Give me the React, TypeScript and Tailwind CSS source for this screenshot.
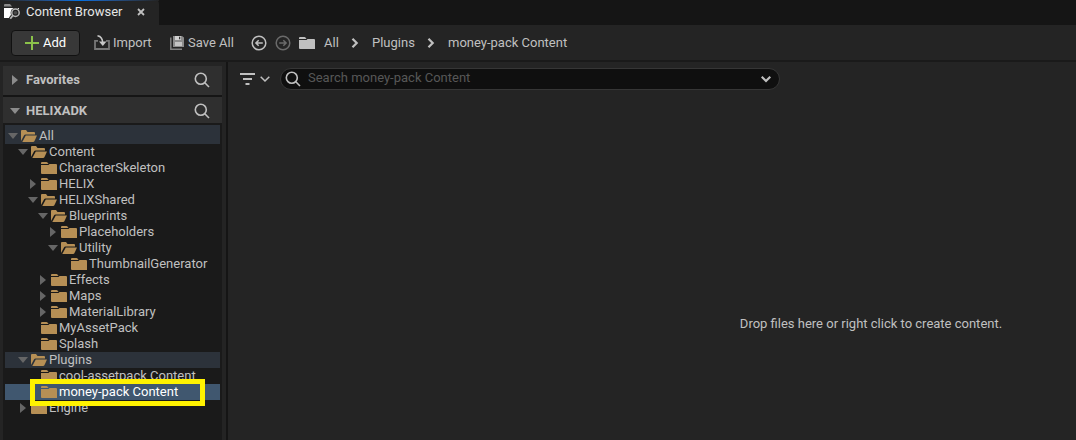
import React from "react";

type Node = {
  label: string;
  depth: number;
  state: "open" | "closed" | "leaf";
  tone?: "path" | "selected";
};

const nodes: Node[] = [
  { label: "All", depth: 0, state: "open", tone: "path" },
  { label: "Content", depth: 1, state: "open" },
  { label: "CharacterSkeleton", depth: 2, state: "leaf" },
  { label: "HELIX", depth: 2, state: "closed" },
  { label: "HELIXShared", depth: 2, state: "open" },
  { label: "Blueprints", depth: 3, state: "open" },
  { label: "Placeholders", depth: 4, state: "closed" },
  { label: "Utility", depth: 4, state: "open" },
  { label: "ThumbnailGenerator", depth: 5, state: "leaf" },
  { label: "Effects", depth: 3, state: "closed" },
  { label: "Maps", depth: 3, state: "closed" },
  { label: "MaterialLibrary", depth: 3, state: "closed" },
  { label: "MyAssetPack", depth: 2, state: "leaf" },
  { label: "Splash", depth: 2, state: "leaf" },
  { label: "Plugins", depth: 1, state: "open", tone: "path" },
  { label: "cool-assetpack Content", depth: 2, state: "leaf" },
  { label: "money-pack Content", depth: 2, state: "leaf", tone: "selected" },
  { label: "Engine", depth: 1, state: "closed" },
];

const indents = ["pl-[3px]", "pl-[13px]", "pl-[23px]", "pl-[33px]", "pl-[43px]", "pl-[53px]"];

function Arrow({ state, className }: { state: Node["state"]; className: string }) {
  return (
    <svg viewBox="0 0 10 10" className={`size-[10px] shrink-0 fill-current ${className}`} aria-hidden="true">
      {state === "open" && <path d="M0 2h10L5 8z" />}
      {state === "closed" && <path d="M2 0v10l6-5z" />}
    </svg>
  );
}

function ClosedFolder({ className }: { className: string }) {
  return (
    <svg viewBox="0 0 16 14" className={`h-[14px] w-4 shrink-0 fill-current ${className}`} aria-hidden="true">
      <path d="M0 2.900V2q0-1 1-1h4.500q.6 0 1 .5L7.500 2.900z" />
      <path d="M0 3.900h7.500L8.500 3H15q1 0 1 1v9H1q-1 0-1-1z" />
    </svg>
  );
}

function OpenFolder({ className }: { className: string }) {
  return (
    <svg viewBox="0 0 16 14" className={`h-[14px] w-4 shrink-0 fill-current ${className}`} aria-hidden="true">
      <path d="M0 12V2q0-1 1-1h4l1.500 2H13q1 0 1 1v1.500H4.500q-1 0-1.400.8z" />
      <path d="M4.800 6.500H16l-2.600 5.700q-.4.800-1.300.800H1.300z" />
    </svg>
  );
}

function SearchIcon({ className }: { className: string }) {
  return (
    <svg viewBox="0 0 16 16" className={`size-4 shrink-0 ${className}`} fill="none" stroke="currentColor" strokeWidth="1.600" aria-hidden="true">
      <circle cx="6.800" cy="6.800" r="5.500" />
      <path d="m10.800 10.800 4.200 4.200" />
    </svg>
  );
}

function Chevron({ className, down = false, thin = false }: { className: string; down?: boolean; thin?: boolean }) {
  return (
    <svg viewBox="0 0 10 10" className={`size-[10px] shrink-0 ${className}`} fill="none" stroke="currentColor" strokeWidth={thin ? 1.5 : 2.2} aria-hidden="true">
      <path d={down ? "m.7 2.700 4.300 4.300 4.300-4.300" : "m2.500.8 4.200 4.200-4.200 4.200"} />
    </svg>
  );
}

function Circled({ flip = false }: { flip?: boolean }) {
  return (
    <svg viewBox="0 0 16 16" className={`size-4 ${flip ? "-scale-x-100" : ""}`} fill="none" stroke="currentColor" strokeWidth="1.500" aria-hidden="true">
      <circle cx="8" cy="8" r="6.800" />
      <path d="M11.800 8H5M7.700 5.200 4.900 8l2.800 2.800" />
    </svg>
  );
}

function TabIcon() {
  return (
    <svg viewBox="0 0 17 16" className="h-4 w-[17px] shrink-0" aria-hidden="true">
      <path d="M0 2.500V1q0-1 1-1h5l2 2.500z" fill="#8a8a8a" />
      <path d="M0 4h15v4l-6 6H0z" fill="#fff" />
      <circle cx="11.500" cy="8.700" r="4.900" fill="#242424" />
      <path d="m9 11.500-2.500 3.500" stroke="#242424" strokeWidth="4" />
      <circle cx="11.500" cy="8.700" r="3.700" fill="none" stroke="#b5b5b5" strokeWidth="1.500" />
      <circle cx="11.500" cy="8.700" r="1.800" fill="#4a4a4a" />
      <path d="m9 11.300-2.700 3.500" stroke="#b5b5b5" strokeWidth="1.800" />
    </svg>
  );
}

function ImportIcon() {
  return (
    <svg viewBox="0 0 16 15" className="h-[15px] w-4 shrink-0" fill="none" aria-hidden="true">
      <path d="M4 5.800H1V14h14V5.800h-3" stroke="#777" strokeWidth="1.800" />
      <path d="M3.500.8Q8.800 1.500 8.800 9" stroke="#c8c8c8" strokeWidth="1.600" />
      <path d="M5 6.500h7.500L8.800 11z" fill="#c8c8c8" />
    </svg>
  );
}

function SaveIcon() {
  return (
    <svg viewBox="0 0 14 14" className="size-[14px] shrink-0" aria-hidden="true">
      <path d="M.8 1.500v11.700H12" fill="none" stroke="#808080" strokeWidth="1.500" />
      <path d="M3 0h9l2 1.500V11H3z" fill="#8c8c8c" />
      <path d="M5 0h6v4H5z" fill="#d0d0d0" />
      <path d="M9 .8h1.300v2.400H9z" fill="#333" />
      <path d="M5 6h7v4H5z" fill="#c4c4c4" />
    </svg>
  );
}

function SectionHeader({ title, state, className }: { title: string; state: "open" | "closed"; className: string }) {
  return (
    <header className={`flex items-center bg-[#2f2f2f] pr-3 pl-[7px] ${className}`}>
      <button type="button" className="flex flex-1 items-center gap-[6px] text-left font-bold">
        <Arrow state={state} className="text-[#8c8c8c]" />
        {title}
      </button>
      <button type="button" aria-label={`Search ${title}`}>
        <SearchIcon className="text-[#c0c0c0]" />
      </button>
    </header>
  );
}

function TreeRow({ node }: { node: Node }) {
  const tone =
    node.tone === "selected"
      ? "bg-[#40576f] text-white"
      : node.tone === "path"
        ? "bg-[#2c323a]"
        : "";
  return (
    <li className={`relative ${tone}`}>
      <button
        type="button"
        className={`flex w-full items-center text-left ${node.depth === 0 ? "h-[19px] pt-[2px]" : "h-4"} ${indents[node.depth]}`}
      >
        <Arrow state={node.state} className="text-[#666]" />
        <span className="ml-[3px] flex items-center gap-[2px] whitespace-nowrap">
          {node.state === "open" ? <OpenFolder className="text-[#b68f55]" /> : <ClosedFolder className="text-[#b68f55]" />}
          {node.label}
        </span>
      </button>
      {node.tone === "selected" && (
        <span className="pointer-events-none absolute -top-[5px] left-[25px] z-10 h-[27px] w-[175px] border-5 border-[#fff200]" />
      )}
    </li>
  );
}

export default function App() {
  return (
    <div className="flex min-h-screen flex-col bg-[#242424] font-[Roboto,sans-serif] text-[13px] leading-4 text-[#c0c0c0]">
      <div className="flex h-[25px] bg-[#151515]">
        <div className="flex w-[159px] flex-col rounded-tr-sm bg-[#242424]">
          <div className="h-px bg-linear-to-r from-[#242424] via-[#0070e0] to-[#242424]" />
          <div className="flex flex-1 items-center pr-[14px] pb-[2px] pl-1">
            <TabIcon />
            <span className="ml-[5px] flex-1 whitespace-nowrap text-[#e6e6e6]">Content Browser</span>
            <button type="button" aria-label="Close tab">
              <svg viewBox="0 0 8 8" className="size-2" stroke="#c0c0c0" strokeWidth="1.800" aria-hidden="true">
                <path d="m1 1 6 6M7 1 1 7" />
              </svg>
            </button>
          </div>
        </div>
      </div>

      <nav className="flex h-[37px] items-center border-b-2 border-[#1a1a1a] pl-[11px]">
        <button type="button" className="flex h-[26px] w-[69px] items-center justify-center gap-1 rounded border border-[#111] bg-[#383838] text-white">
          <svg viewBox="0 0 14 14" className="size-[14px]" stroke="#8bc24a" strokeWidth="2" aria-hidden="true">
            <path d="M7 0v14M0 7h14" />
          </svg>
          Add
        </button>
        <button type="button" className="ml-[14px] flex w-[62px] items-center gap-[3px]">
          <ImportIcon />
          Import
        </button>
        <button type="button" className="ml-[14px] flex w-[68px] items-center gap-1 whitespace-nowrap">
          <SaveIcon />
          Save All
        </button>
        <button type="button" aria-label="Back" className="ml-[13px]">
          <Circled />
        </button>
        <button type="button" aria-label="Forward" className="ml-2 text-[#6a6a6a]">
          <Circled flip />
        </button>
        <ClosedFolder className="ml-2" />
        <a href="#all" className="ml-[9px] w-[14px] whitespace-nowrap">All</a>
        <Chevron className="ml-3" />
        <a href="#plugins" className="ml-3 w-[42px]">Plugins</a>
        <Chevron className="ml-3" />
        <a href="#money-pack" className="ml-3 whitespace-nowrap">money-pack Content</a>
      </nav>

      <div className="flex flex-1">
        <aside className="flex w-[228px] shrink-0 border-r-2 border-[#151515] pr-1 pl-[3px]">
          <div className="flex flex-1 flex-col bg-[#1a1a1a]">
            <div className="h-1 bg-[#242424]" />
            <SectionHeader title="Favorites" state="closed" className="h-[29px] pb-[2px]" />
            <div className="h-[2px] bg-[#151515]" />
            <SectionHeader title="HELIXADK" state="open" className="h-[26px] pt-[2px]" />
            <ul className="mt-[2px] px-[2px]">
              {nodes.map((node) => (
                <TreeRow key={node.label} node={node} />
              ))}
            </ul>
          </div>
        </aside>

        <main className="flex min-w-0 flex-1 flex-col">
          <div className="flex items-center pt-[6px] pl-3">
            <button type="button" aria-label="Filters" className="flex items-center gap-[5px]">
              <svg viewBox="0 0 15 12" className="h-3 w-[15px]" stroke="currentColor" strokeWidth="2" aria-hidden="true">
                <path d="M0 1h15M3 6h9M5.500 11h4" />
              </svg>
              <Chevron className="" down thin />
            </button>
            <label className="ml-[10px] flex h-[22px] w-[500px] items-center rounded-full border border-[#363636] bg-[#0f0f0f] pr-2 pl-1">
              <SearchIcon className="" />
              <input
                type="text"
                aria-label="Search"
                placeholder="Search money-pack Content"
                className="ml-[7px] min-w-0 flex-1 bg-transparent pb-[2px] outline-none placeholder:text-[#575757]"
              />
              <Chevron className="" down />
            </label>
          </div>
          <p className="pt-[226px] pl-[438px] text-center">Drop files here or right click to create content.</p>
        </main>
      </div>
    </div>
  );
}
